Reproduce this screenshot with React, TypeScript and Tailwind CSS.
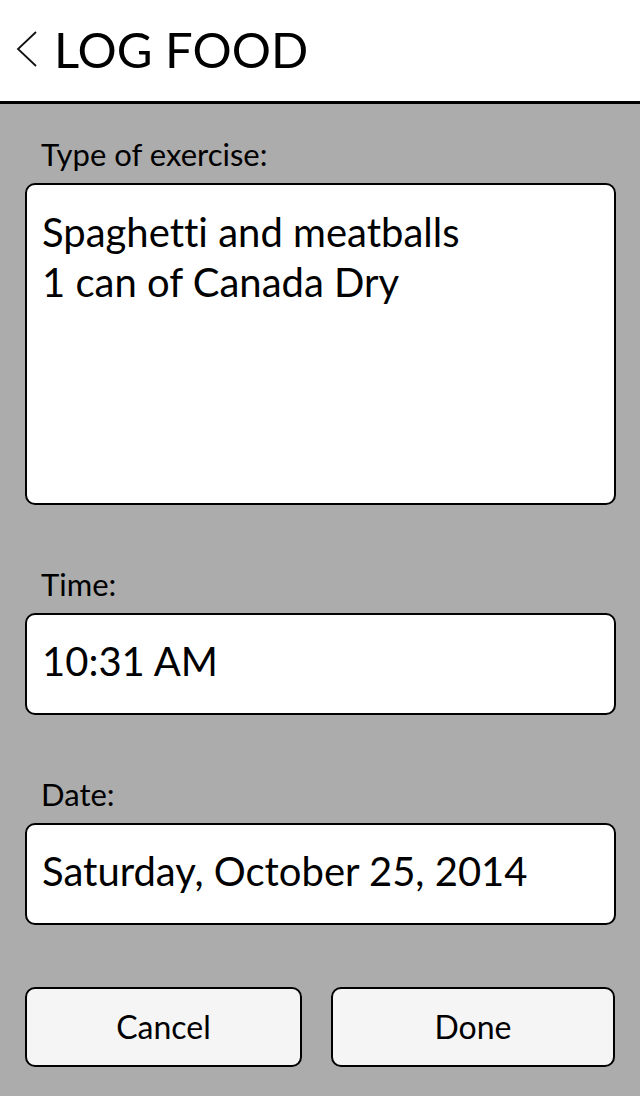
const font = { fontFamily: "Lato, 'Noto Sans', sans-serif" };

const Field = ({ label, children, boxClass }: { label: string; children: React.ReactNode; boxClass: string }) => (
  <div className="flex flex-col">
    <label className="pl-4 text-[31px] leading-[34px] text-black">{label}</label>
    <div
      className={`mt-[12px] rounded-[10px] border-2 border-black bg-white pl-[15px] pr-4 text-[40px] leading-[50px] text-black [font-variant-ligatures:none] ${boxClass}`}
    >
      {children}
    </div>
  </div>
);

export default function App() {
  return (
    <div className="flex h-[1096px] w-[640px] flex-col bg-[#acacac]" style={font}>
      {/* Header */}
      <header className="flex h-[104px] shrink-0 items-center gap-[16px] border-b-[3px] border-black bg-white pl-[16px] pb-[3px]">
        <svg width="22" height="38" viewBox="0 0 22 38" fill="none">
          <path d="M20 2 L2 19 L20 36" stroke="#111" strokeWidth="1.8" />
        </svg>
        <h1 className="text-[49px] leading-none text-black">LOG FOOD</h1>
      </header>

      <main className="flex flex-1 flex-col pl-[25px] pr-[24px] pt-[33px]">
        <Field label="Type of exercise:" boxClass="h-[322px] pt-[22px]">
          <p>Spaghetti and meatballs</p>
          <p>1 can of Canada Dry</p>
        </Field>

        <div className="mt-[62px]">
          <Field label="Time:" boxClass="h-[102px] pt-[21px]">
            10:31 AM
          </Field>
        </div>

        <div className="mt-[62px]">
          <Field label="Date:" boxClass="h-[102px] pt-[21px]">
            Saturday, October 25, 2014
          </Field>
        </div>

        <div className="mt-[62px] flex gap-[29px]">
          <button className="h-[80px] w-[277px] rounded-[10px] border-2 border-black bg-[#f5f5f5] text-[32px] text-black">
            Cancel
          </button>
          <button className="h-[80px] w-[284px] rounded-[10px] border-2 border-black bg-[#f5f5f5] text-[32px] text-black">
            Done
          </button>
        </div>
      </main>
    </div>
  );
}
